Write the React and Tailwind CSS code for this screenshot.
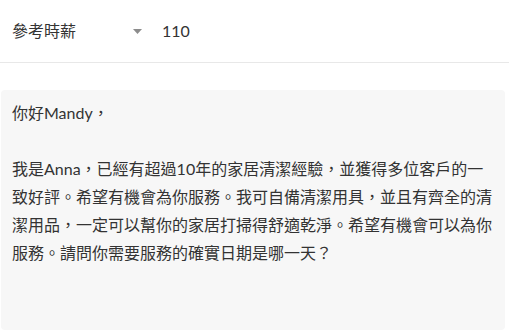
export default function App() {
  const message =
    "你好Mandy，\n\n我是Anna，已經有超過10年的家居清潔經驗，並獲得多位客戶的一致好評。希望有機會為你服務。我可自備清潔用具，並且有齊全的清潔用品，一定可以幫你的家居打掃得舒適乾淨。希望有機會可以為你服務。請問你需要服務的確實日期是哪一天？";

  return (
    <div
      className="w-[509px] h-[335px] bg-white text-[#333333] overflow-hidden"
      style={{ fontFamily: 'Lato, "Noto Sans CJK TC", sans-serif' }}
    >
      <div className="flex items-center h-[62px] px-3 text-[16px]">
        <span className="w-[121px]">參考時薪</span>
        <svg width="9" height="5" viewBox="0 0 9 5" className="text-[#8c8c8c]">
          <path d="M0 0h9L4.5 5z" fill="currentColor" />
        </svg>
        <span className="ml-[20px]">110</span>
      </div>
      <div className="h-px bg-[#e8e8e8]" />
      <div className="mt-[27px] ml-px w-[504px] h-[240px] rounded-[4px] bg-[#f7f7f7] px-[11px] pt-[9px]">
        <p className="text-[16px] leading-[28px] whitespace-pre-wrap">{message}</p>
      </div>
    </div>
  );
}
